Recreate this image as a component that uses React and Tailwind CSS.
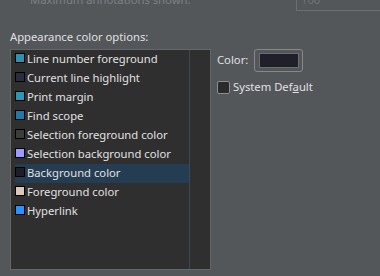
import React from "react";

const OPTIONS = [
  { label: "Line number foreground", color: "#2b93b0" },
  { label: "Current line highlight", color: "#2b2b40" },
  { label: "Print margin", color: "#2c96b5" },
  { label: "Find scope", color: "#1f7aa5" },
  { label: "Selection foreground color", color: "#3c3c3c" },
  { label: "Selection background color", color: "#9d9bff" },
  { label: "Background color", color: "#1e1e26", selected: true },
  { label: "Foreground color", color: "#d8c9b8" },
  { label: "Hyperlink", color: "#2794ff" },
];

export default function App() {
  return (
    <div
      className="h-[276px] w-[380px] overflow-hidden bg-[#53575a] text-[11.25px] text-[#e0e0e0]"
      style={{ fontFamily: '"Noto Sans", "Open Sans", sans-serif' }}
    >
      <div className="-mt-[12px] flex h-[23px] items-start">
        <span className="ml-[30px] mt-[4px] leading-[16px] text-[#7d8184]">Maximum annotations shown:</span>
        <div className="ml-auto h-[23px] w-[86px] -mr-[2px] border border-[#6a6e71] px-[4px] leading-[22px] text-[#6f7376]">100</div>
      </div>

      <div className="ml-[10px] mt-[18px] leading-[16px]">Appearance color options:</div>

      <div className="mt-[4px] flex">
        <div className="ml-[10px] flex h-[221px] w-[201px] border border-[#63676a] bg-[#2f2f2f]">
          <div className="w-[178px]">
            {OPTIONS.map((o) => (
              <div
                key={o.label}
                className={`ml-[4px] flex h-[19px] items-start gap-[2px] ${o.selected ? "bg-[#253d53]" : ""}`}
              >
                <span
                  className="mt-[3px] h-[10px] w-[10px] shrink-0 border border-black"
                  style={{ backgroundColor: o.color }}
                />
                <span className="whitespace-nowrap leading-[17px]">{o.label}</span>
              </div>
            ))}
          </div>
          <div className="w-px bg-[#3f4656]" />
          <div className="flex-1" />
        </div>

        <div className="ml-[6px] flex flex-col">
          <div className="flex items-center">
            <span>Color:</span>
            <div className="ml-[6px] flex h-[23px] w-[49px] items-center justify-center rounded-[3px] border border-[#85898c]">
              <div className="h-[15px] w-[40px] border border-[#6b6f72] bg-[#20202a]" />
            </div>
          </div>
          <div className="mt-[7px] flex items-center gap-[3px]">
            <span className="h-[13px] w-[13px] rounded-[2px] border border-[#8a8e91] bg-[#2b2b2b]" />
            <span>
              System Def<span className="underline">a</span>ult
            </span>
          </div>
        </div>
      </div>
    </div>
  );
}
